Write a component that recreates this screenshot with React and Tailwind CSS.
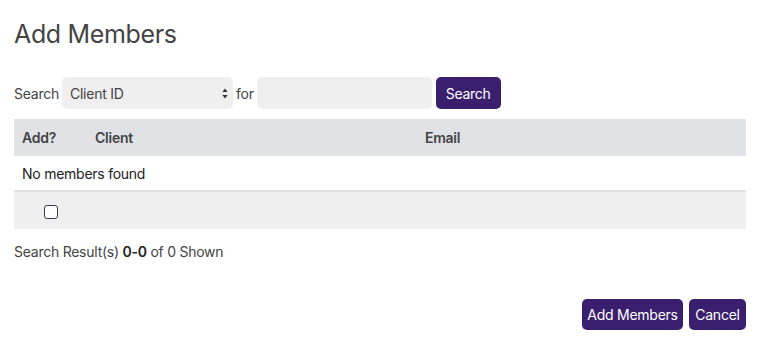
import React from 'react'

function Button({ children, className = '' }) {
  return (
    <button
      className={`rounded-[5px] bg-[#3a1f6e] text-white text-[14px] leading-none ${className}`}
    >
      {children}
    </button>
  )
}

export default function App() {
  return (
    <div
      className="w-[760px] h-[344px] bg-white px-[14px] pt-[19px] text-[#444] tracking-[-0.25px]"
      style={{ fontFamily: 'Inter, "Noto Sans", sans-serif' }}
    >
      <h1 className="text-[25px] leading-[30px] font-normal text-[#444] tracking-[-0.35px]">
        Add Members
      </h1>

      <div className="mt-[28px] flex items-center h-[32px] text-[14px]">
        <span>Search</span>
        <div className="relative ml-[3px] w-[171px] h-[32px]">
          <select className="appearance-none w-full h-full rounded-[5px] bg-[#efefef] pl-[8px] text-[14px] text-[#444] tracking-[-0.25px] outline-none">
            <option>Client ID</option>
          </select>
          <svg
            className="absolute right-[5px] top-[11px] pointer-events-none"
            width="6"
            height="11"
            viewBox="0 0 6 11"
          >
            <path d="M3 0.5 L5.6 4 H0.4 Z" fill="#333" />
            <path d="M3 10.5 L5.6 7 H0.4 Z" fill="#333" />
          </svg>
        </div>
        <span className="ml-[3px]">for</span>
        <input
          className="ml-[3px] w-[175px] h-[32px] rounded-[5px] bg-[#efefef] outline-none px-2"
          type="text"
        />
        <Button className="ml-[4px] w-[65px] h-[32px] pt-[1px]">Search</Button>
      </div>

      <table className="mt-[10px] w-full text-[14px] border-collapse">
        <thead>
          <tr className="bg-[#e1e2e6] h-[37px]">
            <th className="text-left font-semibold pl-[8px] w-[72px]">Add?</th>
            <th className="text-left font-semibold pl-[9px] w-[339px]">Client</th>
            <th className="text-left font-semibold pl-[0px]">Email</th>
          </tr>
        </thead>
        <tbody>
          <tr className="h-[35px] border-b-2 border-[#e1e2e6]">
            <td colSpan={3} className="pl-[8px] text-[#222]">
              No members found
            </td>
          </tr>
          <tr className="h-[38px] bg-[#efefef]">
            <td colSpan={3} className="pl-[30px]">
              <div className="w-[14px] h-[14px] rounded-[3px] border-[1.5px] border-[#3a3a4a] bg-white mt-[2px]" />
            </td>
          </tr>
        </tbody>
      </table>

      <p className="mt-[12px] text-[14px] text-[#444]">
        Search Result(s) <span className="font-semibold text-[#222]">0-0</span> of 0 Shown
      </p>

      <div className="mt-[37px] flex justify-end gap-[6px]">
        <Button className="w-[101px] h-[31px]">Add Members</Button>
        <Button className="w-[57px] h-[31px]">Cancel</Button>
      </div>
    </div>
  )
}
